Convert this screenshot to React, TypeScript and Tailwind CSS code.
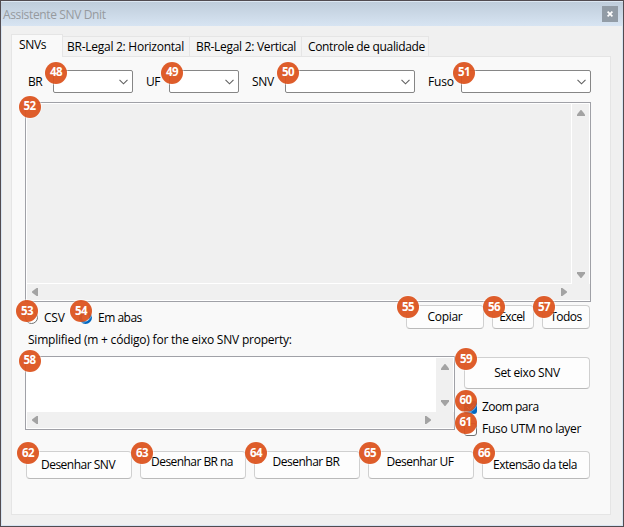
import type { ReactNode } from "react";

function Badge({ n, className }: { n: number; className: string }) {
  return (
    <span
      className={`absolute z-10 flex size-[22px] items-center justify-center rounded-full bg-[#dc5420]/95 pb-px font-['Open_Sans','Noto_Sans',sans-serif] text-[11.5px] leading-none font-bold tracking-[-0.6px] text-white ring-1 ring-white/40 ${className}`}
    >
      {n}
    </span>
  );
}

function Combo({ n, label, labelClass, className }: { n: number; label: string; labelClass: string; className: string }) {
  return (
    <div className="flex h-[23px] items-center">
      <span className={`whitespace-nowrap ${labelClass}`}>{label}</span>
      <div className={`relative flex h-[23px] items-center justify-end rounded-[2px] border border-[#868686] bg-white pr-1 ${className}`}>
        <Badge n={n} className="-top-[9.5px] -left-[9px]" />
        <svg width="9" height="6" viewBox="0 0 9 6" fill="none" stroke="#606060" strokeWidth="1.1">
          <path d="M0.5 0.8 4.5 4.8 8.5 0.8" />
        </svg>
      </div>
    </div>
  );
}

function Arrow({ dir }: { dir: "up" | "down" | "left" | "right" }) {
  const paths = {
    up: "M3.6 0h0.8L8 4.6V6H0V4.6z",
    down: "M0 0h8v1.4L4.4 6h-0.8L0 1.4z",
    left: "M6 0v8H4.6L0 4.4v-0.8L4.6 0z",
    right: "M0 0h1.4L6 3.6v0.8L1.4 8H0z",
  };
  const vertical = dir === "up" || dir === "down";
  return (
    <svg className="shrink-0" width={vertical ? 8 : 6} height={vertical ? 6 : 8} fill="#a3a3a3">
      <path d={paths[dir]} />
    </svg>
  );
}

function TextBox({ n, className, fill }: { n: number; className: string; fill: string }) {
  return (
    <div className={`relative flex flex-col border border-[#a0a1a7] bg-[#f0f0f0] ${className}`}>
      <Badge n={n} className="-top-[7.5px] -left-[7.5px]" />
      <div className="flex min-h-0 flex-1 border-t border-l border-white">
        <div className={`flex-1 border-r border-b border-white ${fill}`} />
        <div className="flex w-[18px] flex-col items-center justify-between border-r border-white pt-[6px] pb-[6px]">
          <Arrow dir="up" />
          <Arrow dir="down" />
        </div>
      </div>
      <div className="flex h-[17px] items-center justify-between border-b border-l border-white pr-[23px] pl-[5px]">
        <Arrow dir="left" />
        <Arrow dir="right" />
      </div>
    </div>
  );
}

function Button({ n, className, children }: { n: number; className: string; children: ReactNode }) {
  return (
    <button className={`relative flex items-center justify-center rounded-[4px] border border-[#d0d0d0] border-b-[#bababa] bg-[#fdfdfd] whitespace-nowrap ${className}`}>
      <Badge n={n} className="-top-[10px] -left-[10px]" />
      {children}
    </button>
  );
}

export default function App() {
  return (
    <div className="flex h-[527px] w-[624px] flex-col overflow-hidden border border-[#514b50] bg-[#f0f0f0] font-['Open_Sans','Noto_Sans',sans-serif] text-[12px] leading-4 text-black">
      <header className="flex h-[25px] shrink-0 items-center justify-between border-t border-[#dce7f2] bg-linear-to-b from-[#bfcddb] to-[#d7e4f2] pr-[5px] pl-[2px]">
        <span className="pt-[2px] tracking-[-0.36px] text-[#969a9e]">Assistente SNV Dnit</span>
        <span className="flex size-4 items-center justify-center bg-[#929ca6]">
          <svg width="6" height="6" viewBox="0 0 6 6" stroke="white" strokeWidth="1.7">
            <path d="M0.6 0.6 5.4 5.4M5.4 0.6 0.6 5.4" />
          </svg>
        </span>
      </header>
      <main className="flex min-h-0 flex-1 flex-col border-x border-b border-[#d7e4f2] pt-2 pr-[10px] pb-[10px] pl-[9px]">
        <nav className="flex h-[22px] items-end">
          <div className="z-[1] -mb-px h-[23px] w-[52px] self-start border border-b-0 border-[#e5e5e5] bg-[#f9f9f9] pt-[2px] pl-[7px] tracking-[-0.3px]">SNVs</div>
          <div className="h-5 w-[127px] border-t border-r border-[#e5e5e5] bg-[#f3f3f3] pt-[2px] pl-1 tracking-[-0.26px] whitespace-nowrap">BR-Legal 2: Horizontal</div>
          <div className="h-5 w-[112px] border-t border-r border-[#e5e5e5] bg-[#f3f3f3] pt-[2px] pl-[6px] tracking-[-0.3px] whitespace-nowrap">BR-Legal 2: Vertical</div>
          <div className="h-5 w-[127px] border-t border-r border-[#e5e5e5] bg-[#f3f3f3] pt-[2px] pl-[6px] tracking-[-0.34px] whitespace-nowrap">Controle de qualidade</div>
        </nav>
        <section className="h-[459px] w-[600px] border border-[#e5e5e5] bg-[#f9f9f9] pt-[13px] pl-[13px]">
          <div className="flex gap-[13px] pl-[3px]">
            <Combo n={48} label="BR" labelClass="w-[25px] tracking-[-0.4px]" className="w-[80px]" />
            <Combo n={49} label="UF" labelClass="w-[23px] tracking-[-0.4px]" className="w-[70px]" />
            <Combo n={50} label="SNV" labelClass="w-[33px] tracking-[-0.3px]" className="w-[130px]" />
            <Combo n={51} label="Fuso" labelClass="w-[33px] tracking-[-0.2px]" className="w-[130px]" />
          </div>
          <TextBox n={52} className="mt-[9px] h-[200px] w-[566px]" fill="bg-[#f0f0f0]" />
          <div className="mt-[3px] flex h-6 w-[565px] items-center">
            <label className="relative flex items-center pt-px">
              <Badge n={53} className="-top-[8.5px] -left-[9px]" />
              <span className="size-[13px] rounded-full border border-[#707070] bg-white" />
              <span className="ml-[6px] w-[35px] tracking-[-0.2px]">CSV</span>
            </label>
            <label className="relative flex items-center pt-px">
              <Badge n={54} className="-top-[8.5px] -left-[9px]" />
              <span className="size-[13px] rounded-full border-[3px] border-[#0067c0] bg-white" />
              <span className="ml-[6px] tracking-[-0.5px]">Em abas</span>
            </label>
            <div className="ml-auto flex gap-2">
              <Button n={55} className="h-6 w-[78px] tracking-[-0.3px]">Copiar</Button>
              <Button n={56} className="h-6 w-[42px] pr-[2px] tracking-[-0.6px]">Excel</Button>
              <Button n={57} className="h-6 w-[48px] tracking-[-0.5px]">Todos</Button>
            </div>
          </div>
          <p className="mt-[3px] h-6 pl-[3px] tracking-[-0.22px] whitespace-nowrap">Simplified (m + código) for the eixo SNV property:</p>
          <div className="flex h-[75px]">
            <TextBox n={58} className="h-[74px] w-[430px]" fill="bg-white" />
            <div className="ml-[9px] w-[127px] pt-px">
              <Button n={59} className="h-8 w-[126px] tracking-[-0.35px]">Set eixo SNV</Button>
              <label className="relative mt-[10px] flex h-4 items-center">
                <Badge n={60} className="-top-[9.5px] -left-[9.5px]" />
                <span className="flex size-[13px] items-center justify-center rounded-[3px] bg-[#0067c0]">
                  <svg width="9" height="7" viewBox="0 0 9 7" fill="none" stroke="white">
                    <path d="m1 3 2.5 2.5L8 1" />
                  </svg>
                </span>
                <span className="ml-[5px] tracking-[-0.5px]">Zoom para</span>
              </label>
              <label className="relative mt-[6px] flex h-4 items-center whitespace-nowrap">
                <Badge n={61} className="-top-[9.5px] -left-[9.5px]" />
                <span className="size-[13px] rounded-[3px] border border-[#707070] bg-white" />
                <span className="ml-[5px] tracking-[-0.28px]">Fuso UTM no layer</span>
              </label>
            </div>
          </div>
          <div className="mt-5 flex gap-2 pl-px">
            <Button n={62} className="h-7 w-[106px] pr-[2px] tracking-[-0.5px]">Desenhar SNV</Button>
            <Button n={63} className="h-7 w-[106px] pr-[2px] pb-[6px] tracking-[-0.55px]">Desenhar BR na</Button>
            <Button n={64} className="h-7 w-[106px] pr-[2px] pb-[6px] tracking-[-0.5px]">Desenhar BR</Button>
            <Button n={65} className="h-7 w-[106px] pr-[2px] pb-[6px] tracking-[-0.5px]">Desenhar UF</Button>
            <Button n={66} className="h-7 w-[108px] pr-[2px] tracking-[-0.5px]">Extensão da tela</Button>
          </div>
        </section>
      </main>
    </div>
  );
}
